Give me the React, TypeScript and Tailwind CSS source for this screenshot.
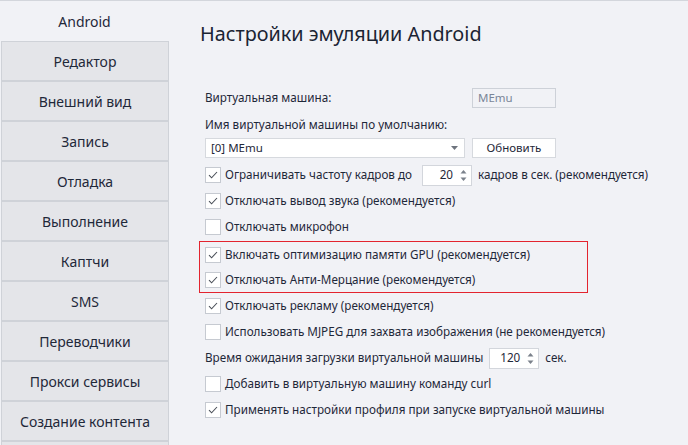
import React from "react";

const tabs = [
  "Редактор",
  "Внешний вид",
  "Запись",
  "Отладка",
  "Выполнение",
  "Каптчи",
  "SMS",
  "Переводчики",
  "Прокси сервисы",
  "Создание контента",
  "",
];

function Check({ checked }: { checked: boolean }) {
  return (
    <span className="w-[16px] h-[16px] shrink-0 border border-[#c6cad1] bg-white flex items-center justify-center">
      {checked && (
        <svg width="10" height="8" viewBox="0 0 10 8" fill="none">
          <path d="M1 4.2 L3.6 6.8 L9 1" stroke="#4a4f58" strokeWidth="1.1" />
        </svg>
      )}
    </span>
  );
}

function CheckRow({ checked, label, h = "h-[26px]" }: { checked: boolean; label: string; h?: string }) {
  return (
    <div className={`${h} flex items-center gap-[4px] whitespace-nowrap`}>
      <Check checked={checked} />
      <span>{label}</span>
    </div>
  );
}

function Spin({ value }: { value: string }) {
  return (
    <div className="w-[50px] h-[21px] bg-white border border-[#d3d6dc] flex items-center justify-end pr-[4px] gap-[7px]">
      <span>{value}</span>
      <svg width="7" height="13" viewBox="0 0 7 13">
        <path d="M0.5 4.5 L3.5 1 L6.5 4.5 Z" fill="#7b818b" />
        <path d="M0.5 8.5 L3.5 12 L6.5 8.5 Z" fill="#7b818b" />
      </svg>
    </div>
  );
}

export default function App() {
  return (
    <div
      className="w-[688px] h-[445px] overflow-hidden bg-[#f1f2f6] border-t border-[#d3d6dc] flex text-[#1f2839] text-[11.7px]"
      style={{ fontFamily: '"Noto Sans", "Open Sans", sans-serif' }}
    >
      <div className="w-[169px] shrink-0 flex flex-col text-[14px]">
        <div className="h-[40px] shrink-0 flex items-center justify-center">Android</div>
        {tabs.map((t, i) => (
          <div
            key={i}
            className="h-[40px] shrink-0 ml-[1px] bg-[#e4e5e9] border border-[#cfd2d8] flex items-center justify-center"
          >
            {t}
          </div>
        ))}
      </div>

      <div className="flex-1 flex flex-col pl-[36px] pt-[18px]">
        <h1 className="-ml-[5px] text-[19.8px] leading-[30px] text-[#1b2433]">Настройки эмуляции Android</h1>

        <div className="mt-[39px] h-[20px] flex items-center w-[351px] justify-between">
          <span>Виртуальная машина:</span>
          <div className="w-[84px] h-[20px] border border-[#cdd1d8] bg-[#f1f2f6] flex items-center pl-[5px] text-[#7a8598] text-[11.5px]">
            MEmu
          </div>
        </div>

        <div className="mt-[7px] h-[20px] flex items-center">Имя виртуальной машины по умолчанию:</div>

        <div className="mt-[3px] h-[20px] flex items-center gap-[7px]">
          <div className="w-[260px] h-[20px] bg-white border border-[#d6d9de] flex items-center justify-between pl-[5px] pr-[6px] text-[11.5px]">
            <span>[0] MEmu</span>
            <svg width="7" height="4" viewBox="0 0 7 4">
              <path d="M0 0 L7 0 L3.5 4 Z" fill="#6e747e" />
            </svg>
          </div>
          <div className="w-[84px] h-[20px] bg-white border border-[#d6d9de] flex items-center justify-center text-[11.5px]">
            Обновить
          </div>
        </div>

        <div className="mt-[4px] h-[26px] flex items-center whitespace-nowrap">
          <Check checked />
          <span className="ml-[4px]">Ограничивать частоту кадров до</span>
          <div className="ml-[10px]">
            <Spin value="20" />
          </div>
          <span className="ml-[6px]">кадров в сек. (рекомендуется)</span>
        </div>
        <CheckRow checked label="Отключать вывод звука (рекомендуется)" />
        <CheckRow checked={false} label="Отключать микрофон" />

        <div className="mt-[1px] -ml-[6px] w-[389px] border border-[#e3242f] pl-[5px] flex flex-col">
          <CheckRow checked label="Включать оптимизацию памяти GPU (рекомендуется)" h="h-[25px]" />
          <CheckRow checked label="Отключать Анти-Мерцание (рекомендуется)" h="h-[25px]" />
        </div>

        <CheckRow checked label="Отключать рекламу (рекомендуется)" />
        <CheckRow checked={false} label="Использовать MJPEG для захвата изображения (не рекомендуется)" />

        <div className="h-[26px] flex items-center whitespace-nowrap">
          <span>Время ожидания загрузки виртуальной машины</span>
          <div className="ml-[6px]">
            <Spin value="120" />
          </div>
          <span className="ml-[6px]">сек.</span>
        </div>

        <CheckRow checked={false} label="Добавить в виртуальную машину команду curl" />
        <CheckRow checked label="Применять настройки профиля при запуске виртуальной машины" />
      </div>
    </div>
  );
}
